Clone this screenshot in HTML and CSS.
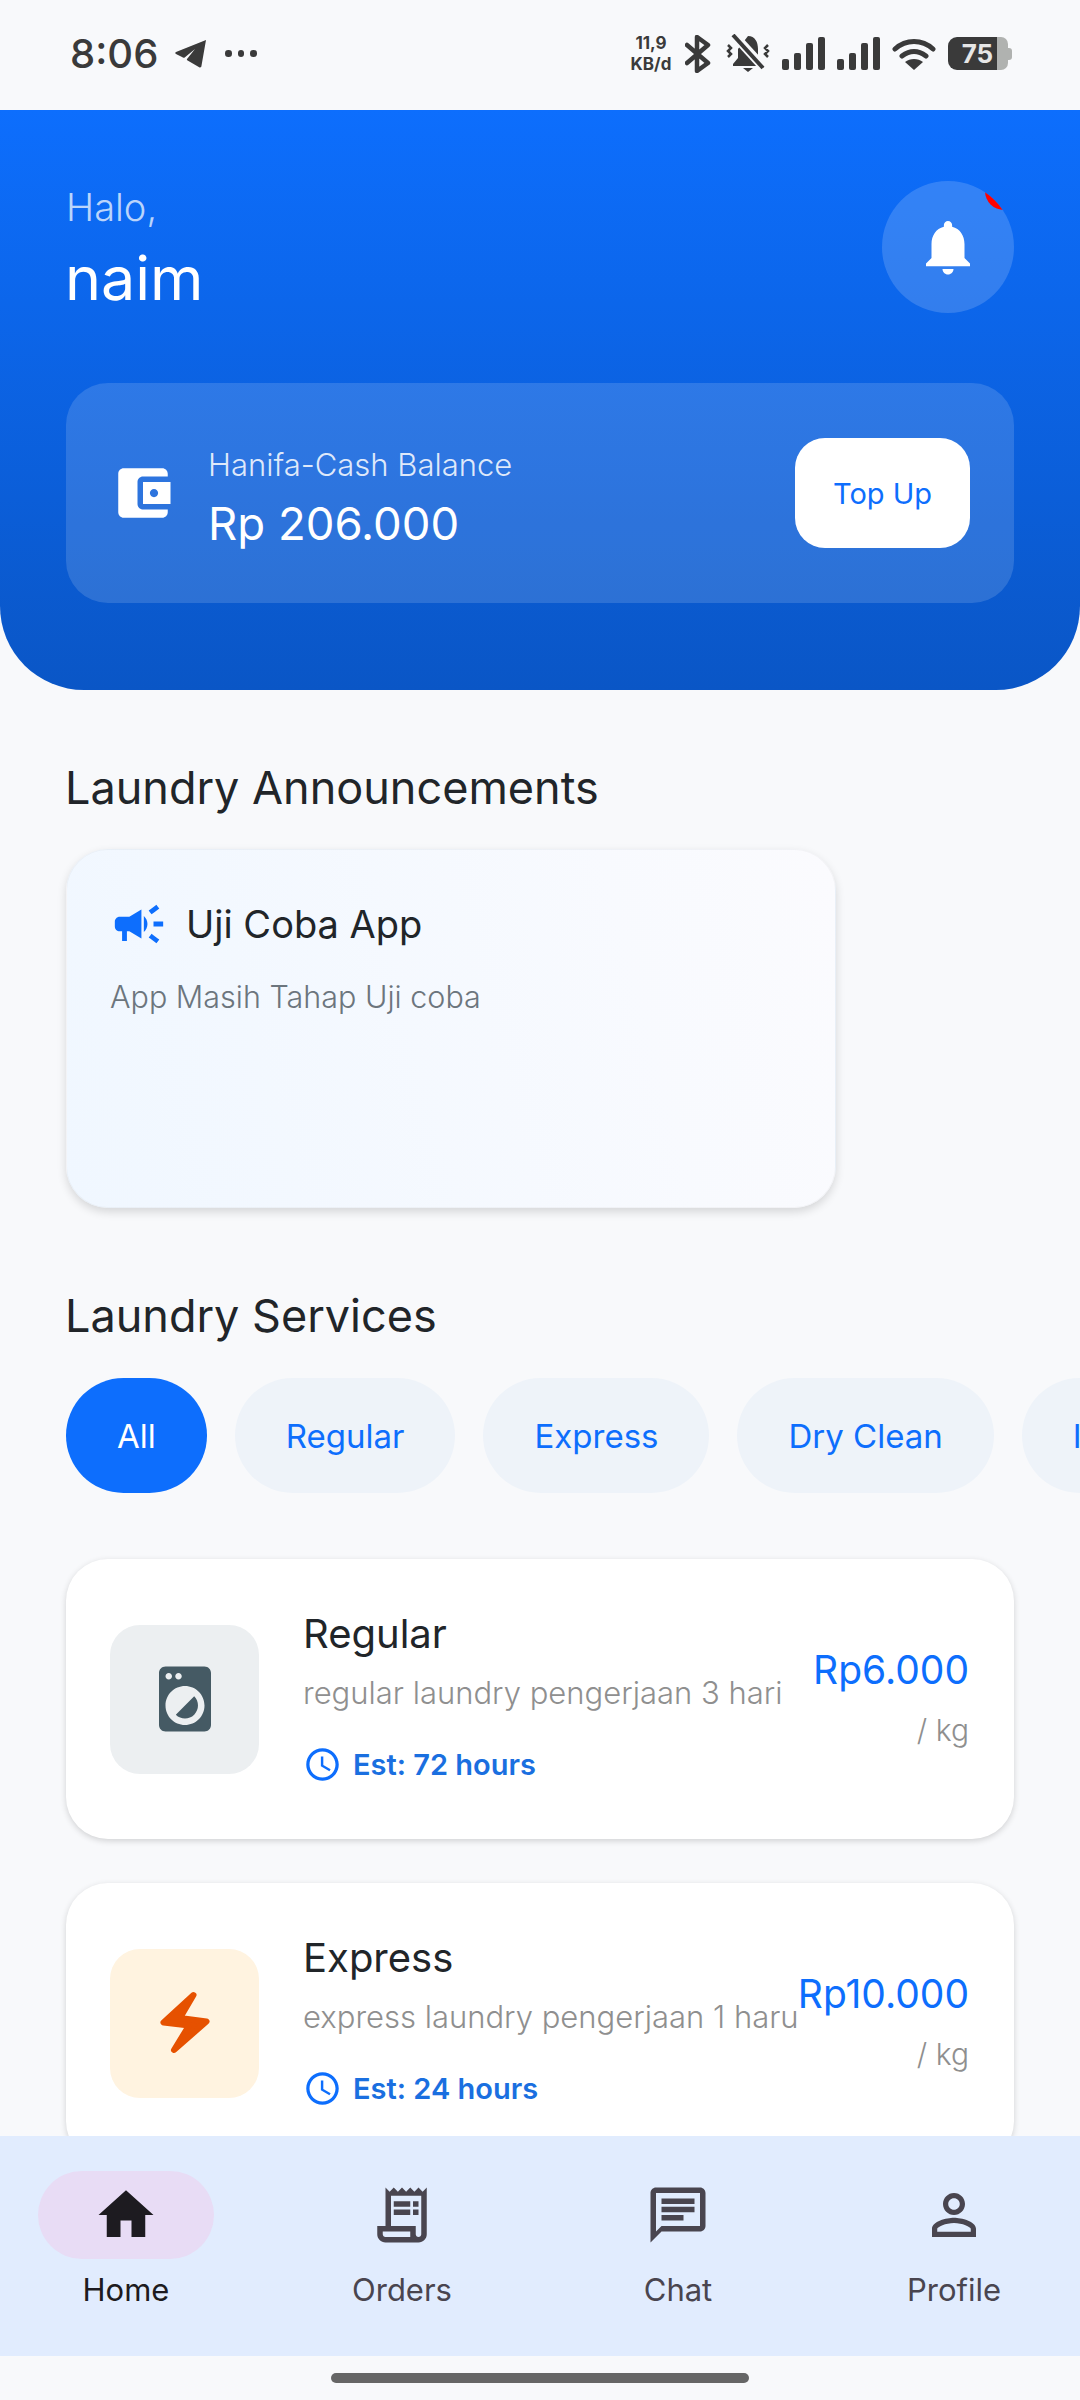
FILE: index.html
```html
<!DOCTYPE html>
<html>

<head>
    <title>Hanifa Laundry</title>
    <link rel="stylesheet" href="styles.css">
</head>

<body>
    <div class="phone">
        <div class="status-bar">
            <div class="status-left">
                <span class="clock">8:06</span>
                <svg class="plane" viewBox="0 0 33 29"><path d="M32 1 2 13c-1 .5-1 1.600 0 2l7 3.500c.6.3 1.200.2 1.700-.1L21 10 13 20c-.3.5-.2 1 .2 1.300l12 7c1 .5 2 0 2.200-1z" fill="#3a3a3a"/></svg>
                <span class="dots"><i></i><i></i><i></i></span>
            </div>
            <div class="status-right">
                <div class="speed"><span>11,9</span><span>KB/d</span></div>
                <svg class="bt" viewBox="0 0 27 38"><path d="M2 10 23 28 12 36V2l11 8L2 28" fill="none" stroke="#3a3a3a" stroke-width="4.500" stroke-linejoin="round" stroke-linecap="round"/></svg>
                <svg class="mute" viewBox="0 0 44 39">
                    <path d="M22 2c7 0 10 6 10 13v9l5 6v2H7v-2l5-6v-9z M17 34h10l-5 4z" fill="#3a3a3a"/>
                    <path d="M7 0 38 34" stroke="#f8f9fb" stroke-width="9"/>
                    <path d="M7 1 37 34" stroke="#3a3a3a" stroke-width="4"/>
                    <path d="M2 11l3 3-3 3 3 3-3 3M42 11l-3 3 3 3-3 3 3 3" fill="none" stroke="#3a3a3a" stroke-width="2.500"/>
                </svg>
                <div class="signal"><i class="b1"></i><i class="b2"></i><i class="b3"></i><i class="b4"></i></div>
                <div class="signal"><i class="b1"></i><i class="b2"></i><i class="b3"></i><i class="b4"></i></div>
                <svg class="wifi" viewBox="0 0 44 33">
                    <path d="M3 12C14 2 30 2 41 12M10 19c8-6 16-6 24 0" fill="none" stroke="#3a3a3a" stroke-width="5" stroke-linecap="round"/>
                    <path d="M22 33 13 25c5-4 13-4 18 0z" fill="#3a3a3a"/>
                </svg>
                <div class="battery"><span class="batt-fill">75</span><span class="batt-rest"></span><span class="batt-tip"></span></div>
            </div>
        </div>

        <div class="header">
            <div class="greet-row">
                <div>
                    <div class="halo">Halo,</div>
                    <div class="name">naim</div>
                </div>
                <div class="bell-btn">
                    <span class="red-dot"></span>
                    <svg class="icon-66" viewBox="0 0 24 24"><path fill="#fff" d="M12 22c1.100 0 2-.9 2-2h-4c0 1.100.89 2 2 2zm6-6v-5c0-3.070-1.640-5.640-4.500-6.320V4c0-.83-.67-1.500-1.500-1.500s-1.500.67-1.500 1.500v.68C7.630 5.360 6 7.920 6 11v5l-2 2v1h16v-1l-2-2z"/></svg>
                </div>
            </div>
            <div class="balance-card">
                <svg class="icon-66" viewBox="0 0 24 24"><path fill="#fff" d="M21 18v1c0 1.100-.9 2-2 2H5c-1.110 0-2-.9-2-2V5c0-1.100.89-2 2-2h14c1.100 0 2 .9 2 2v1h-9c-1.110 0-2 .9-2 2v8c0 1.100.89 2 2 2h9zm-9-2h10V8H12v8zm4-2.500c-.83 0-1.500-.67-1.500-1.500s.67-1.500 1.500-1.500 1.500.67 1.500 1.500-.67 1.500-1.500 1.500z"/></svg>
                <div class="balance-text">
                    <div class="balance-label">Hanifa-Cash Balance</div>
                    <div class="balance-value">Rp 206.000</div>
                </div>
                <div class="topup">Top Up</div>
            </div>
        </div>

        <div class="content">
            <h2 class="section-title first">Laundry Announcements</h2>
            <div class="announce-card">
                <div class="announce-head">
                    <svg class="icon-megaphone" viewBox="0 0 24 24"><path fill="#0d6efd" d="M18 11v2h4v-2h-4zm-2 6.610c.96.71 2.210 1.650 3.200 2.390.4-.53.8-1.070 1.200-1.600-.99-.74-2.240-1.680-3.200-2.400-.4.54-.8 1.080-1.200 1.610zM20.400 5.600c-.4-.53-.8-1.070-1.200-1.600-.99.74-2.240 1.680-3.200 2.400.4.53.8 1.070 1.200 1.600.96-.72 2.210-1.650 3.200-2.400zM4 9c-1.100 0-2 .9-2 2v2c0 1.100.9 2 2 2h1v4h2v-4h1l5 3V6L8 9H4zm11.500 3c0-1.330-.58-2.530-1.500-3.350v6.690c.92-.81 1.500-2.010 1.500-3.340z"/></svg>
                    <span class="announce-title">Uji Coba App</span>
                </div>
                <p class="announce-body">App Masih Tahap Uji coba</p>
            </div>

            <h2 class="section-title">Laundry Services</h2>
            <div class="chips">
                <span class="chip active">All</span>
                <span class="chip">Regular</span>
                <span class="chip">Express</span>
                <span class="chip">Dry Clean</span>
                <span class="chip">Iron</span>
            </div>

            <div class="service-card">
                <div class="service-icon grey">
                    <svg class="icon-78" viewBox="0 0 24 24"><path fill="#455a64" d="M9.170 16.830c1.560 1.560 4.100 1.560 5.660 0 1.560-1.560 1.560-4.100 0-5.660l-5.660 5.660zM18 2.010L6 2c-1.110 0-2 .89-2 2v16c0 1.110.89 2 2 2h12c1.110 0 2-.89 2-2V4c0-1.110-.89-1.990-2-1.990zM10 4c.55 0 1 .45 1 1s-.45 1-1 1-1-.45-1-1 .45-1 1-1zM7 4c.55 0 1 .45 1 1s-.45 1-1 1-1-.45-1-1 .45-1 1-1zm5 16c-3.310 0-6-2.690-6-6s2.690-6 6-6 6 2.690 6 6-2.690 6-6 6z"/></svg>
                </div>
                <div class="service-info">
                    <div class="service-name">Regular</div>
                    <div class="service-desc">regular laundry pengerjaan 3 hari</div>
                    <div class="service-est">
                        <svg class="icon-clock" viewBox="0 0 24 24"><path fill="#0d6efd" d="M11.990 2C6.470 2 2 6.480 2 12s4.470 10 9.990 10C17.520 22 22 17.520 22 12S17.520 2 11.990 2zM12 20c-4.420 0-8-3.580-8-8s3.580-8 8-8 8 3.580 8 8-3.580 8-8 8zM12.500 7H11v6l5.250 3.150.75-1.230-4.500-2.670z"/></svg>
                        <span>Est: 72 hours</span>
                    </div>
                </div>
                <div class="service-price">
                    <div class="price">Rp6.000</div>
                    <div class="unit">/ kg</div>
                </div>
            </div>

            <div class="service-card">
                <div class="service-icon cream">
                    <svg class="icon-72" viewBox="0 0 72 72"><path fill="#e65100" stroke="#e65100" stroke-width="6" stroke-linejoin="round" d="M44.500 8 14.500 35.500 40 38.500 25 63 57.500 34.500 31 31z"/></svg>
                </div>
                <div class="service-info">
                    <div class="service-name">Express</div>
                    <div class="service-desc">express laundry pengerjaan 1 haru</div>
                    <div class="service-est">
                        <svg class="icon-clock" viewBox="0 0 24 24"><path fill="#0d6efd" d="M11.990 2C6.470 2 2 6.480 2 12s4.470 10 9.990 10C17.520 22 22 17.520 22 12S17.520 2 11.990 2zM12 20c-4.420 0-8-3.580-8-8s3.580-8 8-8 8 3.580 8 8-3.580 8-8 8zM12.500 7H11v6l5.250 3.150.75-1.230-4.500-2.670z"/></svg>
                        <span>Est: 24 hours</span>
                    </div>
                </div>
                <div class="service-price">
                    <div class="price">Rp10.000</div>
                    <div class="unit">/ kg</div>
                </div>
            </div>
        </div>

        <div class="nav">
            <div class="nav-item active">
                <div class="nav-pill">
                    <svg class="icon-66" viewBox="0 0 24 24"><path fill="#1d1b20" d="M10 20v-6h4v6h5v-8h3L12 3 2 12h3v8z"/></svg>
                </div>
                <span>Home</span>
            </div>
            <div class="nav-item">
                <div class="nav-pill">
                    <svg class="icon-66" viewBox="0 0 24 24"><path fill="#49454f" d="M19.500 3.500 18 2l-1.500 1.500L15 2l-1.500 1.500L12 2l-1.500 1.500L9 2 7.500 3.500 6 2v14H3v3c0 1.660 1.340 3 3 3h12c1.660 0 3-1.340 3-3V2l-1.500 1.500zM15 20H6c-.55 0-1-.45-1-1v-1h10v2zm4-1c0 .55-.45 1-1 1s-1-.45-1-1v-3H8V5h11v14zM9 7h6v2H9zM16 7h2v2h-2zM9 10h6v2H9zM16 10h2v2h-2z"/></svg>
                </div>
                <span>Orders</span>
            </div>
            <div class="nav-item">
                <div class="nav-pill">
                    <svg class="icon-66" viewBox="0 0 24 24"><path fill="#49454f" d="M20 2H4c-1.100 0-2 .9-2 2v18l4-4h14c1.100 0 2-.9 2-2V4c0-1.100-.9-2-2-2zm0 14H6l-2 2V4h16v12zM6 6h12v2H6zM6 9h12v2H6zM6 12h8v2H6z"/></svg>
                </div>
                <span>Chat</span>
            </div>
            <div class="nav-item">
                <div class="nav-pill">
                    <svg class="icon-66" viewBox="0 0 24 24"><path fill="#49454f" d="M12 5.900c1.160 0 2.100.94 2.100 2.100s-.94 2.100-2.100 2.100S9.900 9.160 9.900 8s.94-2.100 2.100-2.100m0 9c2.970 0 6.100 1.460 6.100 2.100v1.100H5.900V17c0-.64 3.130-2.100 6.100-2.100M12 4C9.790 4 8 5.790 8 8s1.790 4 4 4 4-1.790 4-4-1.790-4-4-4zm0 9c-2.670 0-8 1.340-8 4v3h16v-3c0-2.660-5.330-4-8-4z"/></svg>
                </div>
                <span>Profile</span>
            </div>
        </div>

        <div class="gesture-area"><div class="gesture-bar"></div></div>
    </div>
</body>

</html>
```

FILE: styles.css
```css
/* Page */
body {
    margin: 0;
    font-family: Inter, "Noto Sans", sans-serif;
    background-color: #f8f9fb;
}

.phone {
    width: 1080px;
    height: 2400px;
    display: flex;
    flex-direction: column;
    overflow: hidden;
}

svg {
    display: block;
    flex-shrink: 0;
}

.icon-66 {
    width: 66px;
    height: 66px;
}

.icon-72 {
    width: 72px;
    height: 72px;
}

.icon-78 {
    width: 78px;
    height: 78px;
}

/* Status bar */
.status-bar {
    height: 110px;
    flex-shrink: 0;
    display: flex;
    justify-content: space-between;
    align-items: center;
    padding: 0 68px 3px 70px;
    box-sizing: border-box;
    color: #3a3a3a;
}

.status-left,
.status-right {
    display: flex;
    align-items: center;
}

.clock {
    font-size: 40px;
    font-weight: 500;
}

.plane {
    width: 33px;
    height: 29px;
    margin-left: 16px;
}

.dots {
    display: flex;
    gap: 6px;
    margin-left: 18px;
}

.dots i {
    width: 6.500px;
    height: 6.500px;
    border-radius: 50%;
    background-color: #3a3a3a;
}

.speed {
    width: 44px;
    display: flex;
    flex-direction: column;
    align-items: center;
    font-size: 17px;
    font-weight: 700;
    line-height: 21px;
}

.bt {
    width: 27px;
    height: 38px;
    margin-left: 12px;
}

.mute {
    width: 44px;
    height: 39px;
    margin-left: 14px;
}

.signal {
    display: flex;
    align-items: flex-end;
    gap: 5px;
    height: 33px;
    margin-left: 12px;
}

.signal i {
    width: 7px;
    border-radius: 2px;
    background-color: #3a3a3a;
}

.b1 { height: 11px; }
.b2 { height: 17px; }
.b3 { height: 27px; }
.b4 { height: 33px; }

.wifi {
    width: 44px;
    height: 33px;
    margin-left: 12px;
}

.battery {
    display: flex;
    align-items: center;
    height: 33px;
    margin-left: 12px;
}

.batt-fill {
    width: 49px;
    height: 33px;
    box-sizing: border-box;
    padding-left: 10px;
    background-color: #3a3a3a;
    border-radius: 9px 0 0 9px;
    color: #e6e6e6;
    font-size: 26px;
    font-weight: 700;
    line-height: 33px;
    text-align: center;
}

.batt-rest {
    width: 11px;
    height: 33px;
    background-color: #b0b2b0;
    border-radius: 0 7px 7px 0;
}

.batt-tip {
    width: 4px;
    height: 12px;
    background-color: #b0b2b0;
    border-radius: 0 3px 3px 0;
}

/* Blue header */
.header {
    height: 580px;
    flex-shrink: 0;
    box-sizing: border-box;
    padding: 71px 66px 0;
    background: linear-gradient(180deg, #0d6efd, #0a56c6);
    border-radius: 0 0 84px 84px;
}

.greet-row {
    display: flex;
    justify-content: space-between;
    align-items: flex-start;
    height: 202px;
}

.halo {
    font-size: 38px;
    font-weight: 300;
    line-height: 50px;
    color: rgba(255, 255, 255, 0.72);
    margin-top: 1px;
}

.name {
    font-size: 61px;
    line-height: 80px;
    color: #fff;
    margin-top: 6px;
    margin-left: -1px;
}

.bell-btn {
    position: relative;
    width: 132px;
    height: 132px;
    overflow: hidden;
    border-radius: 50%;
    background-color: rgba(255, 255, 255, 0.16);
    display: flex;
    align-items: center;
    justify-content: center;
}

.red-dot {
    position: absolute;
    top: -9px;
    right: -9px;
    width: 38px;
    height: 38px;
    border-radius: 50%;
    background-color: #f00;
}

.balance-card {
    height: 220px;
    display: flex;
    align-items: center;
    padding: 0 44px;
    background-color: rgba(255, 255, 255, 0.14);
    border-radius: 42px;
}

.balance-text {
    flex: 1;
    margin-left: 32px;
    padding-top: 11px;
}

.balance-label {
    margin-top: 3px;
    font-size: 31px;
    font-weight: 300;
    line-height: 42px;
    color: rgba(255, 255, 255, 0.85);
}

.balance-value {
    font-size: 45.500px;
    line-height: 64px;
    color: #fff;
    margin-top: 6px;
}

.topup {
    width: 175px;
    height: 110px;
    display: flex;
    align-items: center;
    justify-content: center;
    background-color: #fff;
    border-radius: 30px;
    color: #0d6efd;
    font-size: 29px;
}

/* Scroll area */
.content {
    flex: 1;
    min-height: 0;
    overflow: hidden;
    padding: 0 66px;
}

.section-title {
    margin: 0 0 0 -1px;
    font-size: 45px;
    font-weight: 400;
    line-height: 60px;
    color: #212529;
}

.section-title.first {
    margin-top: 68px;
}

.announce-card {
    width: 770px;
    height: 359px;
    box-sizing: border-box;
    margin: 31px 0 78px;
    padding: 44px 44px 44px 43px;
    border-radius: 42px;
    background: linear-gradient(75deg, #f0f7ff, #fbfbfe);
    border: 1px solid rgba(0, 0, 0, 0.03);
    box-shadow: 0 4px 10px rgba(0, 0, 0, 0.14);
}

.announce-head {
    display: flex;
    align-items: center;
    height: 60px;
}

.icon-megaphone {
    width: 58px;
    height: 58px;
}

.announce-title {
    margin-left: 18px;
    font-size: 38px;
    color: #212529;
}

.announce-body {
    margin: 21px 0 0;
    font-size: 30.500px;
    font-weight: 300;
    line-height: 44px;
    color: #6c757d;
}

.chips {
    display: flex;
    gap: 28px;
    margin-top: 32px;
}

.chip {
    flex-shrink: 0;
    height: 115px;
    padding: 0 51px;
    display: flex;
    align-items: center;
    border-radius: 58px;
    background-color: #eef3f9;
    color: #0d6efd;
    font-size: 33px;
}

.chip.active {
    background-color: #0d6efd;
    color: #fff;
}

.service-card {
    height: 280px;
    flex-shrink: 0;
    margin-top: 66px;
    box-sizing: border-box;
    padding: 0 45px 0 44px;
    display: flex;
    align-items: center;
    background-color: #fff;
    border-radius: 42px;
    box-shadow: 0 2px 6px rgba(0, 0, 0, 0.16);
}

.service-card + .service-card {
    margin-top: 44px;
}

.service-icon {
    width: 149px;
    height: 149px;
    flex-shrink: 0;
    display: flex;
    align-items: center;
    justify-content: center;
    border-radius: 30px;
}

.service-icon.grey {
    background-color: #eceff1;
}

.service-icon.cream {
    background-color: #fff3e0;
}

.service-info {
    flex: 1;
    min-width: 0;
    margin-left: 44px;
    padding-bottom: 8px;
    white-space: nowrap;
}

.service-name {
    font-size: 40px;
    line-height: 56px;
    color: #212529;
}

.service-desc {
    margin-top: 9px;
    font-size: 31px;
    font-weight: 300;
    line-height: 44px;
    color: #8f8f8f;
}

.service-est {
    display: flex;
    align-items: center;
    gap: 11px;
    margin-top: 30px;
    font-size: 29px;
    font-weight: 600;
    color: #1a6fe0;
}

.icon-clock {
    width: 39px;
    height: 39px;
}

.service-price {
    text-align: right;
    flex-shrink: 0;
    white-space: nowrap;
    padding-bottom: 8px;
}

.price {
    font-size: 39px;
    line-height: 56px;
    color: #0d6efd;
}

.unit {
    margin-top: 14px;
    font-size: 30px;
    font-weight: 300;
    line-height: 36px;
    color: #8f8f8f;
}

/* Bottom navigation */
.nav {
    height: 220px;
    flex-shrink: 0;
    box-sizing: border-box;
    padding: 35px 38px 0;
    display: flex;
    justify-content: space-between;
    background-color: #e1ecfe;
}

.nav-item {
    width: 176px;
    display: flex;
    flex-direction: column;
    align-items: center;
    font-size: 31px;
    color: #49454f;
}

.nav-item span {
    margin-top: 9px;
    line-height: 44px;
}

.nav-item.active {
    color: #1d1b20;
}

.nav-pill {
    width: 176px;
    height: 88px;
    display: flex;
    align-items: center;
    justify-content: center;
    border-radius: 44px;
}

.nav-item.active .nav-pill {
    background-color: #e8dcf5;
}

.gesture-area {
    height: 44px;
    flex-shrink: 0;
    display: flex;
    justify-content: center;
    padding-top: 17px;
    box-sizing: border-box;
}

.gesture-bar {
    width: 418px;
    height: 10px;
    border-radius: 5px;
    background-color: #666;
}
```
